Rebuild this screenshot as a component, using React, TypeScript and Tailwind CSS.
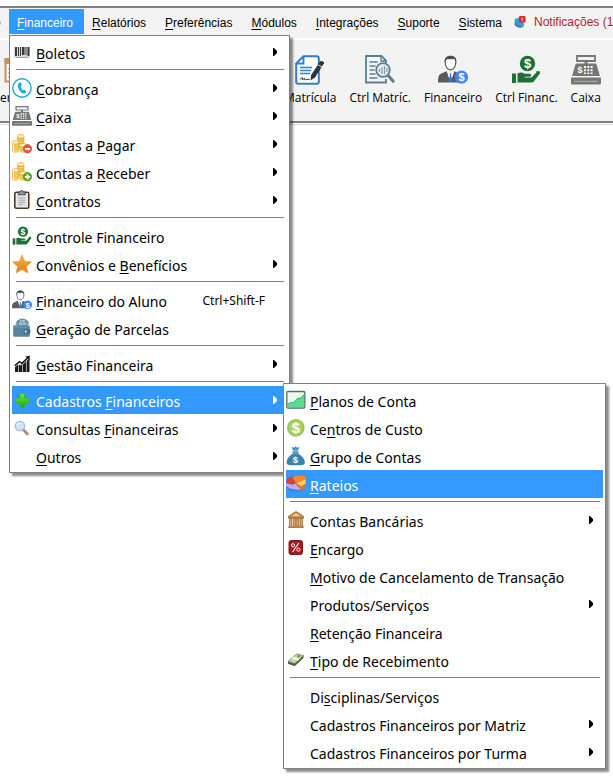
import React from 'react';

type MenuEntry = {
  label?: string;
  icon?: React.ReactNode;
  arrow?: boolean;
  shortcut?: string;
  active?: boolean;
};

/* ---------- Icons ---------- */

const iconClass = 'w-5 h-5 shrink-0';

function CoinStacks() {
  return (
    <>
      <path d="M5.500 2c0-2 6.500-2 6.500 0v12H5.500z" fill="#f5cf62" stroke="#dca63a" strokeWidth=".6" />
      <path d="M5.800 4.500h6M5.800 7h6M5.800 9.500h6" stroke="#dda437" strokeWidth=".8" />
      <ellipse cx="8.750" cy="2.200" rx="3" ry="1.300" fill="#fdeeb5" />
      <path d="M.4 8c0-1.800 6.200-1.800 6.200 0v9c0 1.700-6.200 1.700-6.200 0z" fill="#f7d774" stroke="#dca63a" strokeWidth=".6" />
      <path d="M.6 10.300h6M.6 12.700h6M.6 15.100h6" stroke="#dda437" strokeWidth=".8" />
      <path d="M1.500 9v9" stroke="#fff3c4" strokeWidth="1" />
      <ellipse cx="3.500" cy="8.100" rx="2.800" ry="1.200" fill="#fdeeb5" />
      <path d="M8 11c0-1.800 7-1.800 7 0v6c0 1.700-7 1.700-7 0z" fill="#f7d774" stroke="#dca63a" strokeWidth=".6" />
      <path d="M8.200 13.300h6.500M8.200 15.700h6.500" stroke="#dda437" strokeWidth=".8" />
      <ellipse cx="11.500" cy="11.100" rx="3.200" ry="1.200" fill="#fdeeb5" />
    </>
  );
}

function BarcodeIcon() {
  return (
    <svg viewBox="0 0 20 20" className={iconClass}>
      <path d="M2 5h16v11H2z" fill="#d9d9d9" />
      <path d="M3 5h2v9H3zM6 5h1v9H6zM8 5h1v9H8zM10 5h2.500v8H10zM13.500 5h1v8h-1zM15.500 5h2v9h-2z" fill="#3a3a3a" />
      <path d="M4 15.500h12" stroke="#999" strokeWidth=".8" />
    </svg>
  );
}

function PhoneIcon() {
  return (
    <svg viewBox="0 0 20 20" className={iconClass}>
      <circle cx="10" cy="10" r="9.200" fill="#fff" stroke="#1fa9d6" strokeWidth="1.400" />
      <path d="M7.200 4.800l1.300-.5 1.500 2.900-1.300 1.300c.3 1.500 1.100 2.800 2.300 3.700l1.600-.6 1.700 2.500-.9 1.200c-1.300.7-3 .2-4.600-1.400-2-2-3.200-4.800-2.900-7 .1-1 .6-1.700 1.300-2.100z" fill="#1fa9d6" />
    </svg>
  );
}

function RegisterIcon({ className }: { className: string }) {
  return (
    <svg viewBox="0 0 30 30" className={className}>
      <path d="M6 1h18v5H6z" fill="#f2f2f2" stroke="#757875" strokeWidth="1.800" />
      <path d="M13.500 6h3v4h-3z" fill="#757875" />
      <path d="M6 8.500h18c1 0 1.400.4 1.700 1.400L29 21H1L4.300 9.900C4.600 8.900 5 8.500 6 8.500z" fill="#757875" />
      <text x="9" y="18" fontSize="9" fontWeight="700" textAnchor="middle" fill="#fff" fontFamily="Liberation Sans, sans-serif">$</text>
      <path d="M13 11h2v2h-2zM16.300 11h2v2h-2zM19.600 11h2v2h-2zM13 14.300h2v2h-2zM16.300 14.300h2v2h-2zM19.600 14.300h2v2h-2zM13 17.600h2v1.500h-2zM16.300 17.600h2v1.500h-2zM19.600 17.600h2v1.500h-2z" fill="#fff" />
      <path d="M1 22.500h28c.6 0 1 .4 1 1V28c0 .8-.4 1.500-1.500 1.500h-27C.4 29.500 0 28.800 0 28v-4.500c0-.6.400-1 1-1z" fill="#757875" />
      <path d="M3.500 26.300h23" stroke="#b4b6b4" strokeWidth="1" />
    </svg>
  );
}

function CoinsMinusIcon() {
  return (
    <svg viewBox="0 0 20 20" className={iconClass}>
      <CoinStacks />
      <circle cx="15.500" cy="14.800" r="4.200" fill="#e4564a" stroke="#cc3d35" strokeWidth=".6" />
      <path d="M13 14h5v1.800h-5z" fill="#fff" />
    </svg>
  );
}

function CoinsPlusIcon() {
  return (
    <svg viewBox="0 0 20 20" className={iconClass}>
      <CoinStacks />
      <circle cx="15.500" cy="14.800" r="4.200" fill="#5fa81c" stroke="#3f8410" strokeWidth=".6" />
      <path d="M14.700 12.200h1.700v1.800h1.800v1.700h-1.800v1.800h-1.700v-1.800h-1.800V14h1.800z" fill="#fff" />
    </svg>
  );
}

function ClipboardIcon() {
  return (
    <svg viewBox="0 0 20 20" className={iconClass}>
      <rect x="2.800" y="2.300" width="14" height="16" rx="1.600" fill="#f4efe6" stroke="#4b382b" strokeWidth="1.600" />
      <path d="M4.800 4.500h10v12h-10z" fill="#e0e0e0" />
      <path d="M6.500 8h6.500M6.500 10.200h6.500M6.500 12.400h6.500M6.500 14.600h4.500" stroke="#a5a5a5" strokeWidth=".9" />
      <path d="M6.300 2h2c0-1.200.6-1.600 1.500-1.600s1.500.4 1.500 1.600h2v2.800h-7z" fill="#8d9296" stroke="#3c3c3c" strokeWidth=".8" />
    </svg>
  );
}

function HandCoinIcon({ className }: { className: string }) {
  return (
    <svg viewBox="0 0 30 30" className={className}>
      <circle cx="16.500" cy="8.500" r="7.700" fill="#1f7038" />
      <text x="16.500" y="13" fontSize="13" fontWeight="700" textAnchor="middle" fill="#fff" fontFamily="Liberation Sans, sans-serif">$</text>
      <path d="M1 18.500h4V28H1z" fill="#1f7038" />
      <path d="M6.500 18.500c2.500-1.300 5-1.300 7 .2h5c1.800 0 2.400 2.400.6 3h-5.300v.8h6.600l5.500-5.400c1.400-1.200 3.600.3 2.600 2l-5.300 7c-.8 1-1.600 1.500-3 1.500H6.500z" fill="#1f7038" />
      <path d="M24.500 16.500l4-.5.5 3" fill="#1f7038" />
    </svg>
  );
}

function StarIcon() {
  return (
    <svg viewBox="0 0 20 20" className={iconClass}>
      <defs>
        <linearGradient id="starFill" x1="0" y1="0" x2="0" y2="1">
          <stop offset="0" stopColor="#f7b54a" />
          <stop offset="1" stopColor="#dd7c16" />
        </linearGradient>
      </defs>
      <path d="M10 1l2.700 6.200 6.800.7-5.100 4.500 1.500 6.600L10 15.500 4.100 19l1.500-6.600L.5 7.900l6.800-.7z" fill="url(#starFill)" stroke="#d98a2b" strokeWidth=".5" />
    </svg>
  );
}

function PersonMoneyIcon({ className }: { className: string }) {
  return (
    <svg viewBox="0 0 30 30" className={className}>
      <path d="M12.500 1.500c3.500 0 5.300 2.300 5.300 5.600 0 4-2 7.700-5.300 7.700s-5.300-3.700-5.300-7.700c0-3.300 1.800-5.600 5.300-5.600z" fill="#fff" stroke="#5b5b5b" strokeWidth="1.200" />
      <path d="M6.800 7.500C6.200 3 8.500.8 12.500.8s6.300 2.200 5.700 6.700c-.7-2.200-1.300-3.400-2.700-3.700-2 .8-4.500.5-6 .2-1.500.6-2 1.700-2.700 3.500z" fill="#4c4c4c" />
      <path d="M0 27.500c0-6 .8-8 4-9.200l4.700-2 3.800 4 3.800-4 4.200 2c2 .8 3 2 3.500 4v5.200z" fill="#5b5b5b" />
      <path d="M8.700 16.300l3.800 11.200 3.800-11.200-3.800 2.500z" fill="#fff" />
      <path d="M11.500 18.500h2l-.4 2 1.300 5-1.900 2-1.900-2 1.300-5z" fill="#2e7bf0" />
      <circle cx="23.500" cy="22.200" r="6.600" fill="#4387f5" />
      <text x="23.500" y="26.300" fontSize="11" fontWeight="700" textAnchor="middle" fill="#fff" fontFamily="Liberation Sans, sans-serif">$</text>
    </svg>
  );
}

function WalletIcon() {
  return (
    <svg viewBox="0 0 20 20" className={iconClass}>
      <path d="M3 7.500l2-5 5.500-2L15 2l2 2.500-1 4z" fill="#7da3ba" />
      <path d="M8 1l4.500.6 3.500 2.200L14 7.500H6z" fill="#a7c0cf" stroke="#4d7c98" strokeWidth=".8" />
      <path d="M5 4.500l2-1.500M9.500 3.500l1.500 2M13 3l1 2" stroke="#3f6f8c" strokeWidth="1" />
      <path d="M1.200 7.500h15.600c.6 0 1 .4 1 1v9.300c0 .6-.4 1-1 1H2.400c-.8 0-1.200-.4-1.200-1.200z" fill="#55839f" />
      <path d="M1.200 9h16" stroke="#7fa4ba" strokeWidth=".7" />
      <path d="M12.800 11.500h5.500v4h-5.500c-2 0-2-4 0-4z" fill="#3f6f8c" />
      <circle cx="13.800" cy="13.500" r="1" fill="#fff" />
    </svg>
  );
}

function BarChartIcon() {
  return (
    <svg viewBox="0 0 20 20" className={iconClass}>
      <path d="M3 13l3.300-2.500V18H3zM6.900 10.500l1.600 1 1.700-1.200V18H6.900zM10.800 10.500L14 7.500V18h-3.200zM14.600 7L17.500 4.500V18h-2.900z" fill="#1b1b1b" />
      <path d="M2.800 11.700l4.700-4 2.500 1.700 6-5.700" fill="none" stroke="#1b1b1b" strokeWidth="1.600" />
      <path d="M13.300 2.500l4.700-.8-.7 4.800z" fill="#1b1b1b" />
    </svg>
  );
}

function PlusIcon() {
  return (
    <svg viewBox="0 0 20 20" className={iconClass}>
      <defs>
        <linearGradient id="plusFill" x1="0" y1="0" x2="0" y2="1">
          <stop offset="0" stopColor="#6bea4c" />
          <stop offset="1" stopColor="#1fa80f" />
        </linearGradient>
      </defs>
      <path d="M8 3.500h4.500v4.700H17v4.500h-4.500v4.800H8v-4.800H3.300V8.200H8z" fill="url(#plusFill)" stroke="#2db41b" strokeWidth=".6" />
    </svg>
  );
}

function SearchIcon() {
  return (
    <svg viewBox="0 0 20 20" className={iconClass}>
      <path d="M11 11.500l4.500 4.500" stroke="#b98756" strokeWidth="2.600" strokeLinecap="round" />
      <circle cx="8" cy="8" r="4.700" fill="#cfe2f6" stroke="#a5b9da" strokeWidth="1.300" />
      <path d="M5.200 7.700c.2-1.500 1.300-2.500 2.800-2.600" fill="none" stroke="#fff" strokeWidth="1" />
    </svg>
  );
}

function AreaChartIcon() {
  return (
    <svg viewBox="0 0 20 20" className={iconClass}>
      <rect x=".8" y="1.500" width="18" height="16.500" rx="1" fill="#eef8f2" stroke="#4f6f60" strokeWidth="1.300" />
      <path d="M1.500 14.500l3-2 3 .3 4-4.500 2.500.2 4.200-4v12.900H1.500z" fill="#5cdc93" />
      <path d="M1.500 14.500l3-2 3 .3 4-4.500 2.500.2 4.200-4" fill="none" stroke="#27a861" strokeWidth=".9" />
    </svg>
  );
}

function DollarCoinIcon() {
  return (
    <svg viewBox="0 0 20 20" className={iconClass}>
      <circle cx="9.800" cy="9.800" r="8.900" fill="#9cc656" />
      <circle cx="9.800" cy="9.800" r="7" fill="#acd26c" />
      <text x="9.800" y="15" fontSize="14.500" fontWeight="700" textAnchor="middle" fill="#fff" fontFamily="Liberation Sans, sans-serif">$</text>
    </svg>
  );
}

function MoneyBagIcon() {
  return (
    <svg viewBox="0 0 20 20" className={iconClass}>
      <path d="M5.500.8l2.300 1L9.500.2l1.600 1.600 2.400-1-1.500 4H7z" fill="#4795c2" />
      <path d="M6.500 5.500h6v1.300h-6z" fill="#2a668c" />
      <path d="M7 7.300h5c3.200 2.200 6.800 5.800 6.800 8.900 0 2.300-1.500 3-4 3H4.600c-2.500 0-4-.7-4-3C.6 13.100 3.900 9.500 7 7.300z" fill="#3b82ad" />
      <text x="9.500" y="17" fontSize="9.500" fontWeight="700" textAnchor="middle" fill="#fff" fontFamily="Liberation Sans, sans-serif">$</text>
    </svg>
  );
}

function PieIcon() {
  return (
    <svg viewBox="0 0 20 20" className={iconClass}>
      <path d="M0 11.500c4 1 8 1.500 11 1l6 3.500c-4 2.200-8 2.500-11 1.600-3-.9-5.200-2.800-6-6.100z" fill="#4d7fd6" />
      <path d="M0 9.300c4 1.600 7 1.200 10 .5l6 5.200c-6 1.500-13 .3-16-3.500z" fill="#b9aef0" />
      <path d="M0 8C.5 4.500 3 2.800 6.500 2.200L10 8.500l-2.500 1.700C5 10.500 2 10 0 8z" fill="#e2402e" />
      <path d="M6.500 3.500c3-1.700 8-2.200 13-1.300V6L10 8.800z" fill="#f98a22" />
      <path d="M10.500 9.300L19.800 5v8l-3.500 3-5.800-4.500z" fill="#d97726" />
      <path d="M10.500 9.300L19.800 5v4.500l-4.500 2.700z" fill="#f7c85c" />
    </svg>
  );
}

function BankIcon() {
  return (
    <svg viewBox="0 0 20 20" className={iconClass}>
      <path d="M10 1.500l7.500 4.700v2h-15v-2z" fill="#c98f45" stroke="#8b5a22" strokeWidth=".7" />
      <path d="M10 3.200l4 2.700H6z" fill="#f3d59b" />
      <path d="M3.500 8.500h2.300V16H3.500zM7.300 8.500h2.300V16H7.300zM10.700 8.500H13V16h-2.300zM14.300 8.500h2.300V16h-2.300z" fill="#dfaa63" stroke="#8b5a22" strokeWidth=".7" />
      <path d="M2.300 16.200h15.400V18H2.300z" fill="#b77a36" />
    </svg>
  );
}

function PercentIcon() {
  return (
    <svg viewBox="0 0 20 20" className={iconClass}>
      <rect x="3" y="2.500" width="13.500" height="14" rx="2" fill="#a5191f" stroke="#6f1114" strokeWidth=".9" />
      <path d="M12.800 5l-6.200 9" stroke="#fff" strokeWidth="1.100" />
      <circle cx="7" cy="7.300" r="1.600" fill="none" stroke="#fff" strokeWidth="1" />
      <circle cx="12.400" cy="11.700" r="1.600" fill="none" stroke="#fff" strokeWidth="1" />
    </svg>
  );
}

function CashIcon() {
  return (
    <svg viewBox="0 0 20 20" className={iconClass}>
      <path d="M2 11.500l8.500-7.500 7 1.500-8.800 8.300z" fill="#c3cfa8" stroke="#5f7a3e" strokeWidth=".7" />
      <path d="M2 11.500l6.700 2.300v2.500L2 13.800zM8.700 13.800l8.800-8.300V8l-8.800 8.300z" fill="#4d6339" />
      <path d="M5.200 8.800l6.500 2 2.500-2.300-6.500-2z" fill="#f4f4dc" />
      <circle cx="12.700" cy="6.300" r="1.300" fill="#6f9149" />
    </svg>
  );
}

function BellIcon() {
  return (
    <svg viewBox="0 0 12 14" className="w-3 h-[14px] shrink-0">
      <path d="M.8 4l5.200-1.500 4 6-.5 3.500-3.500 1C3 12.500.8 11 .5 9.500z" fill="#3f96d3" />
      <path d="M1 9.500l5.500 2.300" stroke="#2777ae" strokeWidth="1" />
      <rect x="5" y="1" width="6.500" height="6.500" rx="1" fill="#e5252b" />
      <path d="M8.200 2.500V6" stroke="#fff" strokeWidth=".8" />
    </svg>
  );
}

function EnrollIcon() {
  return (
    <svg viewBox="0 0 30 30" className="w-[30px] h-[30px]">
      <path d="M8.500 1.200h13.300c1.500 0 2 .6 2 2v23.600c0 1.500-.6 2-2 2H3.200c-1.500 0-2-.6-2-2V8.500z" fill="#fff" stroke="#2f7dcb" strokeWidth="2" />
      <path d="M1.500 8.500h7v-7" fill="none" stroke="#2f7dcb" strokeWidth="1.800" />
      <path d="M5 12.500h12M5 15.500h11M5 18.500h10" stroke="#2f7dcb" strokeWidth="1.500" />
      <path d="M5 24.500l2-2 .5 2.500 2-2 .5 2 1.500-.6h3" fill="none" stroke="#333" strokeWidth="1" />
      <path d="M25 6.500c1-1.200 4.600-.2 4 1.800L20 22.500l-4.500 3 .6-5.500z" fill="#2e3640" />
      <path d="M23.300 10l4 2.200" stroke="#f2f2f2" strokeWidth=".9" />
    </svg>
  );
}

function EnrollCtrlIcon() {
  return (
    <svg viewBox="0 0 30 30" className="w-[30px] h-[30px]">
      <path d="M21 8V5.500L16.500 1H1v26.500h20V24" fill="none" stroke="#5f7f8d" strokeWidth="1.800" />
      <path d="M16 1v5h5" fill="none" stroke="#5f7f8d" strokeWidth="1.400" />
      <path d="M4.500 7h8M4.500 11h6M4.500 15h5M4.500 19h6M4.500 23h8" stroke="#5f7f8d" strokeWidth="1.500" />
      <circle cx="18" cy="15" r="6.800" fill="#e8f0f3" stroke="#5f7f8d" strokeWidth="1.800" />
      <path d="M14.500 17v-3M17 19v-7M19.500 19v-8M22 17v-4" stroke="#7f9ba7" strokeWidth="1.200" />
      <path d="M23 20.200l6 7" stroke="#5f7f8d" strokeWidth="3" />
    </svg>
  );
}

function PaperIcon() {
  return (
    <svg viewBox="0 0 26 28" className="w-[26px] h-[30px]">
      <path d="M1.500 3h23v22.500h-23z" fill="#fff" stroke="#c69364" strokeWidth="2" />
      <path d="M.5 2h25v6H.5z" fill="#c69364" />
      <path d="M4 13h18M4 17h18M4 21h18" stroke="#d9ae86" strokeWidth="1.500" />
    </svg>
  );
}

/* ---------- Data ---------- */

// '&' marks the letter that is underlined. An entry without a label is a separator.
const financeMenu: MenuEntry[] = [
  { label: '&Boletos', icon: <BarcodeIcon />, arrow: true },
  {},
  { label: '&Cobrança', icon: <PhoneIcon />, arrow: true },
  { label: '&Caixa', icon: <RegisterIcon className={iconClass} />, arrow: true },
  { label: 'Contas a &Pagar', icon: <CoinsMinusIcon />, arrow: true },
  { label: 'Contas a &Receber', icon: <CoinsPlusIcon />, arrow: true },
  { label: '&Contratos', icon: <ClipboardIcon />, arrow: true },
  {},
  { label: '&Controle Financeiro', icon: <HandCoinIcon className={iconClass} /> },
  { label: 'Convênios e &Benefícios', icon: <StarIcon />, arrow: true },
  {},
  { label: '&Financeiro do Aluno', icon: <PersonMoneyIcon className={iconClass} />, shortcut: 'Ctrl+Shift-F' },
  { label: '&Geração de Parcelas', icon: <WalletIcon /> },
  {},
  { label: '&Gestão Financeira', icon: <BarChartIcon />, arrow: true },
  {},
  { label: 'Cadastros &Financeiros', icon: <PlusIcon />, arrow: true, active: true },
  { label: 'Consultas &Financeiras', icon: <SearchIcon />, arrow: true },
  { label: '&Outros', arrow: true },
];

const recordsMenu: MenuEntry[] = [
  { label: '&Planos de Conta', icon: <AreaChartIcon /> },
  { label: 'Ce&ntros de Custo', icon: <DollarCoinIcon /> },
  { label: '&Grupo de Contas', icon: <MoneyBagIcon /> },
  { label: '&Rateios', icon: <PieIcon />, active: true },
  {},
  { label: 'Contas Bancárias', icon: <BankIcon />, arrow: true },
  { label: '&Encargo', icon: <PercentIcon /> },
  { label: '&Motivo de Cancelamento de Transação' },
  { label: 'Produtos/Serviços', arrow: true },
  { label: '&Retenção Financeira' },
  { label: '&Tipo de Recebimento', icon: <CashIcon /> },
  {},
  { label: 'Di&sciplinas/Serviços' },
  { label: 'Cadastros Financeiros por Matriz', arrow: true },
  { label: 'Cadastros Financeiros por Turma', arrow: true },
];

const menuBar = ['&Relatórios', '&Preferências', '&Módulos', '&Integrações', '&Suporte', '&Sistema'];

const tools = [
  { label: 'Matrícula', icon: <EnrollIcon /> },
  { label: 'Ctrl Matríc.', icon: <EnrollCtrlIcon /> },
  { label: 'Financeiro', icon: <PersonMoneyIcon className="w-[30px] h-[30px]" /> },
  { label: 'Ctrl Financ.', icon: <HandCoinIcon className="w-[30px] h-[30px]" /> },
  { label: 'Caixa', icon: <RegisterIcon className="w-[30px] h-[30px]" /> },
];

/* ---------- Components ---------- */

function Mnemonic({ text }: { text: string }) {
  const at = text.indexOf('&');
  if (at < 0) return <>{text}</>;
  return (
    <>
      {text.slice(0, at)}
      <u className="underline-offset-2">{text[at + 1]}</u>
      {text.slice(at + 2)}
    </>
  );
}

function Menu({ entries, className }: { entries: MenuEntry[]; className: string }) {
  return (
    <ul
      role="menu"
      className={`absolute bg-white border border-[#808080] p-[2px] shadow-[3px_3px_2px_rgba(0,0,0,0.45)] font-['Noto_Sans',sans-serif] ${className}`}
    >
      {entries.map((entry, i) =>
        entry.label ? (
          <li key={i} role="none">
            <button
              type="button"
              role="menuitem"
              className={`flex items-center w-full h-7 pr-[10px] text-left whitespace-nowrap ${entry.active ? 'bg-[#3399ff] text-white' : 'text-black'}`}
            >
              <span className="w-6 shrink-0">{entry.icon}</span>
              <span className="flex-1 pt-1 text-[14px] leading-5">
                <Mnemonic text={entry.label} />
              </span>
              {entry.shortcut && <span className="pr-3 pt-[2px] text-[12px] leading-4">{entry.shortcut}</span>}
              {entry.arrow && (
                <svg viewBox="0 0 4 8" className="w-1 h-2 shrink-0" fill="currentColor">
                  <path d="M0 0h1l3 3v2L1 8H0z" />
                </svg>
              )}
            </button>
          </li>
        ) : (
          <li key={i} role="separator" className="h-2 pt-[3px] pl-1 pr-[3px]">
            <div className="h-px bg-[#808080]" />
          </li>
        )
      )}
    </ul>
  );
}

export default function App() {
  return (
    <div className="relative min-h-screen bg-white overflow-hidden pt-[6px]">
      {/* Menu bar */}
      <nav className="flex h-8 border-t-2 border-[#808080] bg-[#f3f3f3] pt-px pb-1 font-['Liberation_Sans',sans-serif] text-[12px] leading-4 whitespace-nowrap">
        <svg viewBox="0 0 9 26" className="w-[9px] shrink-0" aria-hidden="true">
          <path d="M0 13h1v3H0z" fill="#6cc5f5" />
        </svg>
        <button type="button" className="pl-2 pr-[11px] pt-[2px] bg-[#3399ff] text-white">
          <Mnemonic text="&Financeiro" />
        </button>
        {menuBar.map(item => (
          <button key={item} type="button" className="pl-2 pr-[11px] pt-[2px] text-black">
            <Mnemonic text={item} />
          </button>
        ))}
        <button type="button" className="flex items-center gap-2 px-px text-[#b01e2e]">
          <BellIcon /> Notificações (1)
        </button>
      </nav>

      {/* Toolbar */}
      <div className="flex items-start gap-[13px] h-[85px] border-t-2 border-b-2 border-t-white border-b-[#808080] bg-[#f3f3f3] pt-[15px] text-[12px] leading-4 whitespace-nowrap font-['Open_Sans',sans-serif]">
        <button type="button" className="flex flex-col items-start gap-[5px] w-[271px] shrink-0">
          <span className="pl-1"><PaperIcon /></span>
          er
        </button>
        {tools.map(tool => (
          <button key={tool.label} type="button" className="flex flex-col items-center gap-[5px] shrink-0">
            {tool.icon}
            {tool.label}
          </button>
        ))}
      </div>
      <div className="h-px mt-px bg-[#d9d9d9]" />

      {/* Open menus */}
      <Menu entries={financeMenu} className="left-[9px] top-[35px] w-[281px]" />
      <Menu entries={recordsMenu} className="left-[283px] top-[383px] w-[323px]" />
    </div>
  );
}
